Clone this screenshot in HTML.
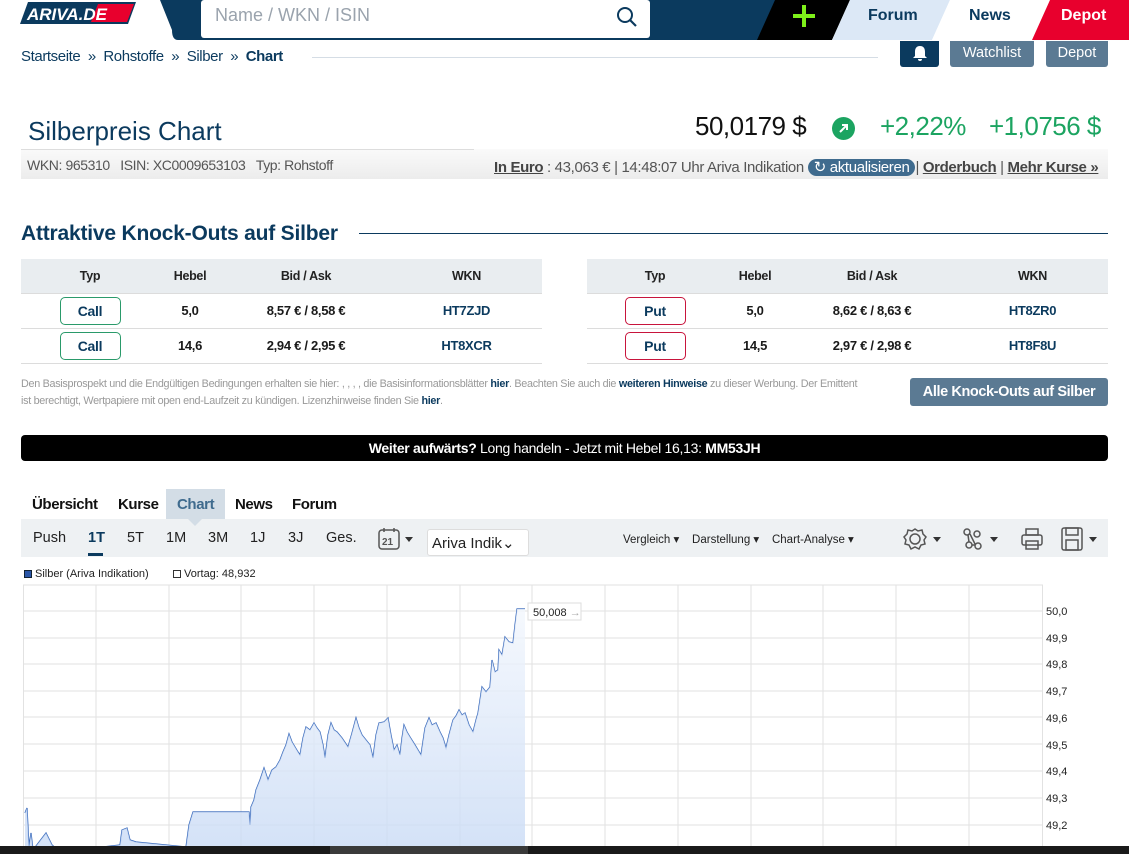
<!DOCTYPE html>
<html><head><meta charset="utf-8"><style>
*{box-sizing:border-box;margin:0;padding:0}
body{width:1129px;height:854px;overflow:hidden;background:#fff;font-family:"Liberation Sans",sans-serif;color:#0b3a5e;position:relative}
.a{position:absolute;white-space:nowrap}
.n{letter-spacing:-0.4px}
table{border-collapse:collapse;position:absolute;font-size:13px;letter-spacing:-0.3px}
td,th{text-align:center;height:35px;border-bottom:1px solid #dcdcdc;font-weight:bold;color:#1a1a1a}
th{background:#e9edf0;height:34px;font-size:12.5px;color:#222}
td.w{color:#0b3a5e}
.btn{display:inline-block;width:61px;height:28px;line-height:26px;border:1px solid #2a9a6a;border-radius:5px;color:#0b3a5e;font-weight:bold;font-size:14px}
.put{border-color:#c8143c}
u{text-decoration:underline}
.t{position:absolute;top:530px;font-size:14.5px;color:#222}
</style></head><body>

<svg class="a" style="left:0;top:0" width="1129" height="42">
<path d="M190 0 H780 L760 40 H190 Q180 40 178 30 Z" fill="#0b3a5e"/>
<path d="M160 0 H200 V40 H178 Q172 40 172 30 Z" fill="#0b3a5e"/>
<rect x="201" y="0" width="449" height="38" rx="3" fill="#fff"/>
<path d="M775 0 H850 L832 40 H757 Z" fill="#000"/>
<path d="M850 0 H950 L932 40 H832 Z" fill="#dce8f6"/>
<path d="M950 0 H1050 L1032 40 H932 Z" fill="#fff"/>
<path d="M1050 0 H1129 V40 H1032 Z" fill="#e8002d"/>
<path d="M804 5 V27 M793 16 H815" stroke="#7ef01a" stroke-width="4"/>
<circle cx="625" cy="15" r="7" fill="none" stroke="#0b3a5e" stroke-width="2"/>
<path d="M630 20 L636 26" stroke="#0b3a5e" stroke-width="2.2"/>
<path d="M28 2 H136 L128 24 H20 Z" fill="#0b3a5e"/>
<path d="M98 4 H134 L127 22 H91 Z" fill="#e8002d"/>
<text x="27" y="20" font-family="Liberation Sans" font-weight="bold" font-style="italic" font-size="17" fill="#fff">ARIVA.DE</text>
</svg>
<div class="a" style="left:215px;top:5px;font-size:18px;color:#9aa3ad">Name / WKN / ISIN</div>
<div class="a" style="left:868px;top:7px;font-size:16px;font-weight:bold">Forum</div>
<div class="a" style="left:969px;top:7px;font-size:16px;font-weight:bold">News</div>
<div class="a" style="left:1061px;top:7px;font-size:16px;font-weight:bold;color:#fff">Depot</div>

<div class="a n" style="left:21px;top:48px;font-size:15px">Startseite &nbsp;» &nbsp;Rohstoffe &nbsp;» &nbsp;Silber &nbsp;» &nbsp;<b>Chart</b></div>
<div class="a" style="left:312px;top:57px;width:566px;border-top:1px solid #d5dde5"></div>
<div class="a" style="left:900px;top:41px;width:39px;height:26px;background:#0b3a5e;border-radius:0 0 3px 3px"></div>
<svg class="a" style="left:911px;top:44px" width="18" height="18"><path d="M9 2 C5 2 4 5 4 8 V12 L2 14 H16 L14 12 V8 C14 5 13 2 9 2Z M7 15 H11 A2 2 0 0 1 7 15Z" fill="#fff"/></svg>
<div class="a" style="left:950px;top:41px;width:84px;height:26px;background:#5b7a93;color:#fff;font-size:14.5px;text-align:center;line-height:24px;border-radius:0 0 3px 3px">Watchlist</div>
<div class="a" style="left:1046px;top:41px;width:62px;height:26px;background:#5b7a93;color:#fff;font-size:14.5px;text-align:center;line-height:24px;border-radius:0 0 3px 3px">Depot</div>

<div class="a" style="left:28px;top:116px;font-size:26px;color:#0b3a5e">Silberpreis Chart</div>
<div class="a" style="left:21px;top:149px;width:1087px;height:30px;background:linear-gradient(#fafafa,#ececec)"></div>
<div class="a" style="left:21px;top:149px;width:453px;border-top:1px solid #ddd"></div>
<div class="a n" style="left:27px;top:157px;font-size:14px;color:#555">WKN: 965310 &nbsp;&nbsp;ISIN: XC0009653103 &nbsp;&nbsp;Typ: Rohstoff</div>
<div class="a" style="left:695px;top:111px;font-size:26px;color:#111;letter-spacing:-0.5px">50,0179 $</div>
<div class="a" style="left:832px;top:117px;width:23px;height:23px;border-radius:50%;background:#1ca461"></div>
<svg class="a" style="left:832px;top:117px" width="23" height="23"><path d="M8 15 L15 8 M10 8 H15 V13" stroke="#fff" stroke-width="2" fill="none"/></svg>
<div class="a" style="left:880px;top:111px;font-size:26px;color:#1ca461;letter-spacing:-0.5px">+2,22%</div>
<div class="a" style="left:989px;top:111px;font-size:26px;color:#1ca461;letter-spacing:-0.5px">+1,0756 $</div>
<div class="a" style="left:494px;top:158px;font-size:15px;color:#555;letter-spacing:-0.35px"><u style="color:#444;font-weight:bold">In Euro</u> : 43,063 € | 14:48:07 Uhr Ariva Indikation <span style="background:#3f6b8e;color:#fff;border-radius:9px;padding:0 6px">↻ aktualisieren</span>| <u style="color:#444;font-weight:bold">Orderbuch</u> | <u style="color:#444;font-weight:bold">Mehr Kurse »</u></div>

<div class="a" style="left:21px;top:222px;font-size:21px;font-weight:bold;letter-spacing:-0.2px">Attraktive Knock-Outs auf Silber</div>
<div class="a" style="left:359px;top:233px;width:749px;border-top:1px solid #0b3a5e"></div>

<table style="left:21px;top:259px;width:521px">
<tr><th style="width:138px">Typ</th><th style="width:62px">Hebel</th><th style="width:170px">Bid / Ask</th><th>WKN</th></tr>
<tr><td><span class="btn">Call</span></td><td>5,0</td><td>8,57 € / 8,58 €</td><td class="w">HT7ZJD</td></tr>
<tr><td><span class="btn">Call</span></td><td>14,6</td><td>2,94 € / 2,95 €</td><td class="w">HT8XCR</td></tr>
</table>
<table style="left:587px;top:259px;width:521px">
<tr><th style="width:136px">Typ</th><th style="width:64px">Hebel</th><th style="width:170px">Bid / Ask</th><th>WKN</th></tr>
<tr><td><span class="btn put">Put</span></td><td>5,0</td><td>8,62 € / 8,63 €</td><td class="w">HT8ZR0</td></tr>
<tr><td><span class="btn put">Put</span></td><td>14,5</td><td>2,97 € / 2,98 €</td><td class="w">HT8F8U</td></tr>
</table>

<div class="a" style="left:21px;top:376px;font-size:10.8px;color:#999;line-height:17px;letter-spacing:-0.3px">Den Basisprospekt und die Endgültigen Bedingungen erhalten sie hier: , , , , die Basisinformationsblätter <b style="color:#0b3a5e">hier</b>. Beachten Sie auch die <b style="color:#0b3a5e">weiteren Hinweise</b> zu dieser Werbung. Der Emittent<br>ist berechtigt, Wertpapiere mit open end-Laufzeit zu kündigen. Lizenzhinweise finden Sie <b style="color:#0b3a5e">hier</b>.</div>
<div class="a" style="left:910px;top:378px;width:198px;height:28px;background:#5b7a93;border-radius:3px;color:#fff;font-weight:bold;font-size:14.5px;text-align:center;line-height:28px;letter-spacing:-0.4px">Alle Knock-Outs auf Silber</div>

<div class="a" style="left:21px;top:435px;width:1087px;height:26px;background:#000;border-radius:4px;color:#fff;font-size:14px;text-align:center;line-height:26px;letter-spacing:-0.3px"><b>Weiter aufwärts?</b> Long handeln - Jetzt mit Hebel 16,13: <b>MM53JH</b></div>

<div class="a" style="left:166px;top:489px;width:59px;height:30px;background:#d3dde6"></div>
<div class="a n" style="left:32px;top:496px;font-size:15px;font-weight:bold;color:#111">Übersicht</div>
<div class="a n" style="left:118px;top:496px;font-size:15px;font-weight:bold;color:#111">Kurse</div>
<div class="a n" style="left:177px;top:496px;font-size:15px;font-weight:bold;color:#3f6b8e">Chart</div>
<div class="a n" style="left:235px;top:496px;font-size:15px;font-weight:bold;color:#111">News</div>
<div class="a n" style="left:292px;top:496px;font-size:15px;font-weight:bold;color:#111">Forum</div>
<div class="a" style="left:21px;top:519px;width:1087px;height:38px;background:#eef1f3"></div>
<div class="a" style="left:188px;top:519px;width:0;height:0;border-left:7px solid transparent;border-right:7px solid transparent;border-top:7px solid #d3dde6"></div>
<span class="t" style="left:33px">Push</span>
<span class="t" style="left:88px;color:#0b3a5e;font-weight:bold">1T</span>
<span class="t" style="left:127px">5T</span>
<span class="t" style="left:166px">1M</span>
<span class="t" style="left:208px">3M</span>
<span class="t" style="left:250px">1J</span>
<span class="t" style="left:288px">3J</span>
<span class="t" style="left:326px">Ges.</span>
<div class="a" style="left:88px;top:553px;width:15px;height:3px;background:#0b3a5e"></div>
<svg class="a" style="left:376px;top:527px" width="42" height="26"><rect x="3" y="3" width="20" height="19" rx="3" fill="none" stroke="#555" stroke-width="1.5"/><path d="M8 1 V5 M18 1 V5" stroke="#555" stroke-width="1.5"/><text x="6" y="18" font-size="10" font-weight="bold" fill="#555" font-family="Liberation Sans">21</text><path d="M29 10 H37 L33 15Z" fill="#333"/></svg>
<div class="a" style="left:427px;top:529px;width:102px;height:27px;background:#fff;border:1px solid #ddd;border-radius:3px;font-size:15px;color:#222;padding:4px 0 0 4px">Ariva Indik⌄</div>
<div class="a" style="left:623px;top:532px;font-size:11.5px;color:#222">Vergleich ▾ &nbsp;&nbsp;&nbsp;Darstellung ▾ &nbsp;&nbsp;&nbsp;Chart-Analyse ▾</div>
<svg class="a" style="left:900px;top:524px" width="205" height="30" fill="none" stroke="#555" stroke-width="1.5">
<circle cx="15" cy="15" r="5"/><path d="M15 5 L18 7 L22 6 L23 10 L26 13 L24 16 L25 20 L21 21 L19 25 L15 23 L11 25 L9 21 L5 20 L6 16 L4 13 L7 10 L8 6 L12 7Z"/>
<path d="M33 13 H41 L37 18Z" fill="#333" stroke="none"/>
<circle cx="67" cy="8" r="3"/><circle cx="77" cy="10" r="3"/><circle cx="69" cy="21" r="3"/><circle cx="78" cy="22" r="3"/><path d="M68 11 L69 18 M72 21 H75 M70 10 L75 20"/>
<path d="M90 13 H98 L94 18Z" fill="#333" stroke="none"/>
<rect x="122" y="11" width="20" height="10" rx="2"/><rect x="126" y="5" width="12" height="6"/><rect x="126" y="17" width="12" height="8"/>
<rect x="162" y="4" width="20" height="22" rx="2"/><rect x="166" y="4" width="12" height="7"/><rect x="166" y="16" width="12" height="10"/>
<path d="M189 13 H197 L193 18Z" fill="#333" stroke="none"/>
</svg>

<div class="a" style="left:24px;top:570px;width:8px;height:8px;background:#2a56a8;border:1px solid #123"></div>
<div class="a" style="left:35px;top:568px;font-size:11px;color:#222">Silber (Ariva Indikation)</div>
<div class="a" style="left:173px;top:570px;width:8px;height:8px;border:1px solid #333"></div>
<div class="a" style="left:184px;top:568px;font-size:11px;color:#222">Vortag: 48,932</div>
<svg class="a" style="left:0;top:580px" width="1129" height="274">
<defs><linearGradient id="g" x1="0" y1="0" x2="0" y2="1"><stop offset="0" stop-color="#f3f7fd"/><stop offset="1" stop-color="#c8daf5"/></linearGradient></defs>
<g stroke="#e2e2e2" stroke-width="1">
<path d="M23 5 H1043 M23 31 H1043 M23 58 H1043 M23 84 H1043 M23 111 H1043 M23 137 H1043 M23 164 H1043 M23 191 H1043 M23 218 H1043 M23 245 H1043"/>
<path d="M23.5 5 V274 M96 5 V274 M169 5 V274 M241 5 V274 M314 5 V274 M387 5 V274 M460 5 V274 M532 5 V274 M605 5 V274 M678 5 V274 M751 5 V274 M823 5 V274 M896 5 V274 M969 5 V274 M1042.5 5 V274"/>
</g>
<g transform="translate(0,-580)">
<path d="M25 813 L27 808 L29 847 L31 833 L33 850 L46 833 L52 845 L60 852 L120 845 L122 830 L127 828 L130 840 L136 842 L186 847 L189 825 L193 812 L249 812 L250 825 L251 807 L254 800 L256 790 L260 780 L264 768 L268 780 L272 770 L276 767 L280 760 L283 752 L286 745 L289 734 L292 742 L295 747 L298 752 L300 755 L303 738 L306 727 L310 730 L314 723 L317 728 L320 732 L323 745 L325 758 L328 735 L331 723 L334 730 L337 732 L342 738 L348 747 L352 733 L356 718 L359 728 L362 735 L366 740 L370 745 L373 758 L376 735 L379 723 L384 722 L388 718 L391 735 L394 750 L397 745 L400 755 L402 738 L404 725 L407 732 L410 737 L415 745 L421 755 L425 728 L429 718 L432 725 L436 723 L440 732 L443 738 L446 748 L449 735 L453 720 L456 716 L459 710 L462 715 L465 713 L469 725 L473 732 L476 720 L478 713 L480 700 L482 687 L486 692 L490 687 L492 660 L495 672 L498 670 L499 650 L502 655 L505 637 L509 642 L513 643 L515 625 L517 609 L525 609" fill="none" stroke="#2f62b8" stroke-width="1.2"/>
<path d="M25 813 L27 808 L29 847 L31 833 L33 850 L46 833 L52 845 L60 852 L120 845 L122 830 L127 828 L130 840 L136 842 L186 847 L189 825 L193 812 L249 812 L250 825 L251 807 L254 800 L256 790 L260 780 L264 768 L268 780 L272 770 L276 767 L280 760 L283 752 L286 745 L289 734 L292 742 L295 747 L298 752 L300 755 L303 738 L306 727 L310 730 L314 723 L317 728 L320 732 L323 745 L325 758 L328 735 L331 723 L334 730 L337 732 L342 738 L348 747 L352 733 L356 718 L359 728 L362 735 L366 740 L370 745 L373 758 L376 735 L379 723 L384 722 L388 718 L391 735 L394 750 L397 745 L400 755 L402 738 L404 725 L407 732 L410 737 L415 745 L421 755 L425 728 L429 718 L432 725 L436 723 L440 732 L443 738 L446 748 L449 735 L453 720 L456 716 L459 710 L462 715 L465 713 L469 725 L473 732 L476 720 L478 713 L480 700 L482 687 L486 692 L490 687 L492 660 L495 672 L498 670 L499 650 L502 655 L505 637 L509 642 L513 643 L515 625 L517 609 L525 609 L525 854 L25 854Z" fill="url(#g)" opacity="0.8"/>
</g>
<rect x="528" y="23" width="53" height="17" fill="#fff" stroke="#ddd"/>
<text x="533" y="36" font-size="11" fill="#222" font-family="Liberation Sans">50,008 <tspan fill="#aaa">→</tspan></text>
<g font-size="11" fill="#222" font-family="Liberation Sans">
<text x="1046" y="35">50,0</text><text x="1046" y="62">49,9</text><text x="1046" y="88">49,8</text><text x="1046" y="115">49,7</text><text x="1046" y="142">49,6</text><text x="1046" y="169">49,5</text><text x="1046" y="195">49,4</text><text x="1046" y="222">49,3</text><text x="1046" y="249">49,2</text>
</g>
<rect x="0" y="266" width="1129" height="8" fill="#1a1a1a"/>
<rect x="330" y="266" width="198" height="8" fill="#3a3a3a"/>
</svg>
</body></html>
